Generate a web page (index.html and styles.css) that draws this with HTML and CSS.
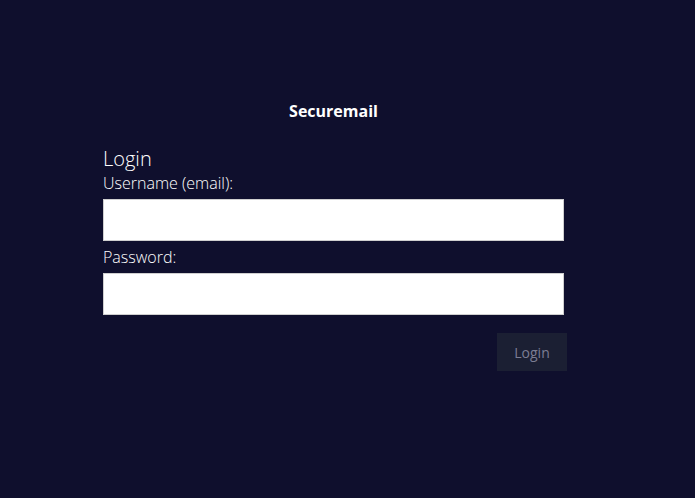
FILE: index.html
```html
<!DOCTYPE html>
<html>
<head>
<meta charset="utf-8">
<link rel="stylesheet" href="styles.css">
</head>
<body>
<div class="page">
  <h1 class="brand">Securemail</h1>
  <form class="login">
    <h2 class="login-title">Login</h2>
    <label class="field-label" for="u">Username (email):</label>
    <input class="field-input" id="u" type="text">
    <label class="field-label" for="p">Password:</label>
    <input class="field-input" id="p" type="password">
    <div class="actions">
      <button type="button" class="btn">Login</button>
    </div>
  </form>
</div>
</body>
</html>
```
FILE: styles.css
```css
html, body {
  margin: 0;
  padding: 0;
  background: #0f0f2d;
  height: 100%;
}
body {
  font-family: "Open Sans", "Liberation Sans", sans-serif;
  color: #ffffff;
}
.page {
  padding: 100px 0 0 103px;
  width: 464px;
}
.brand {
  margin: 0;
  font-size: 16px;
  font-weight: 700;
  text-align: center;
  line-height: 22px;
  padding-right: 3px;
}
.login {
  display: flex;
  flex-direction: column;
  margin-top: 24px;
}
.login-title {
  margin: 0;
  font-size: 20px;
  font-weight: 300;
  line-height: 26px;
}
.field-label {
  font-size: 16px;
  font-weight: 300;
  line-height: 22px;
  margin-bottom: 5px;
}
.field-input {
  box-sizing: border-box;
  width: 461px;
  height: 42px;
  margin: 0 0 5px 0;
  border: 1px solid #cfcfcf;
  background: #ffffff;
  padding: 0 8px;
  font-family: inherit;
  font-size: 15px;
}
.actions {
  display: flex;
  justify-content: flex-end;
  margin-top: 13px;
}
.btn {
  width: 70px;
  height: 38px;
  background: #1b1f33;
  color: #7b7d93;
  border: none;
  font-family: inherit;
  font-size: 14px;
  padding: 0;
}
```
